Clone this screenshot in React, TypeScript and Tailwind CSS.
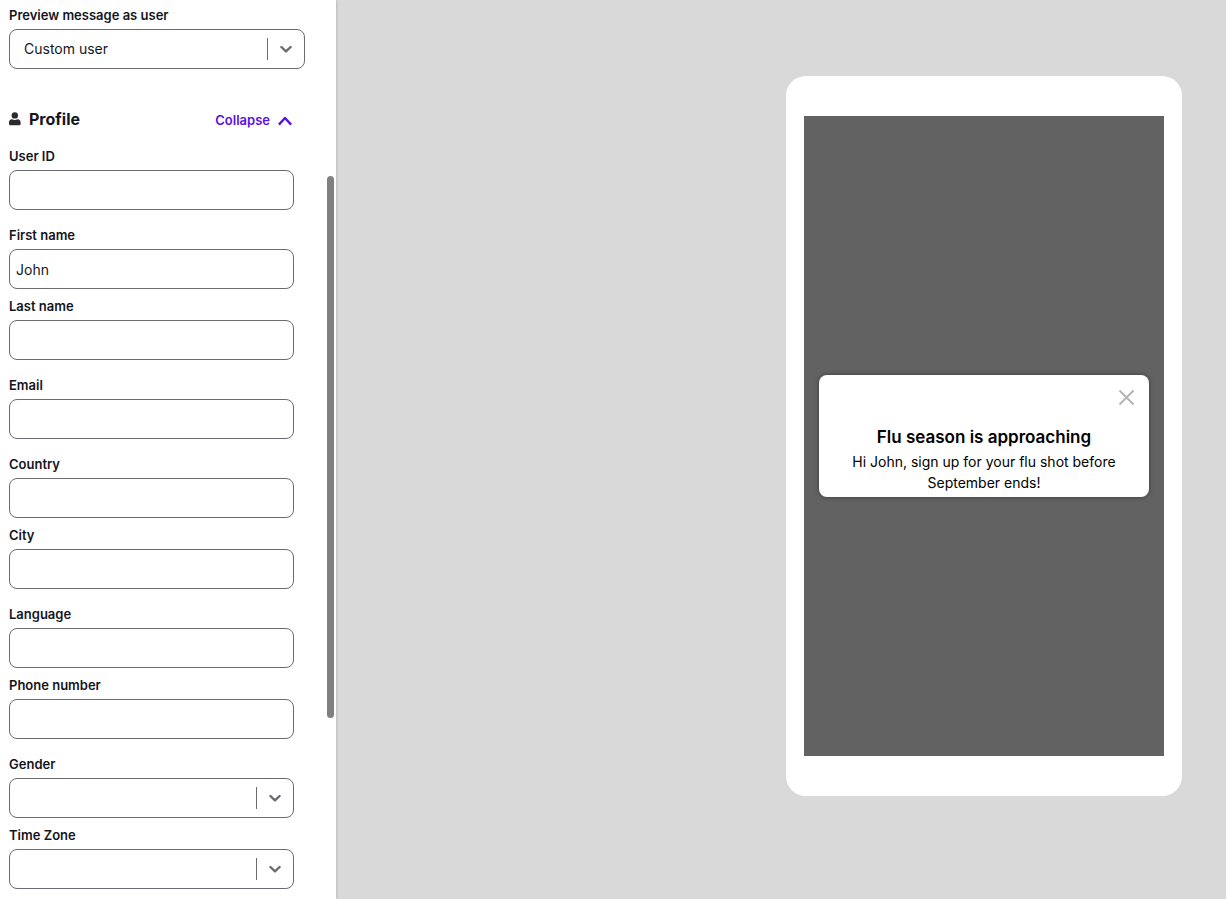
import React from 'react';

type Field = {
    id: string;
    label: string;
    value?: string;
    type?: 'text' | 'select';
    spaced?: boolean;
};

const fields: Field[] = [
    { id: 'user-id', label: 'User ID' },
    { id: 'first-name', label: 'First name', value: 'John', spaced: true },
    { id: 'last-name', label: 'Last name' },
    { id: 'email', label: 'Email', spaced: true },
    { id: 'country', label: 'Country', spaced: true },
    { id: 'city', label: 'City' },
    { id: 'language', label: 'Language', spaced: true },
    { id: 'phone', label: 'Phone number' },
    { id: 'gender', label: 'Gender', type: 'select', spaced: true },
    { id: 'time-zone', label: 'Time Zone', type: 'select' },
];

const Label = ({ htmlFor, children }: { htmlFor: string; children: React.ReactNode }) => (
    <label htmlFor={htmlFor} className="block text-[13px] leading-7 font-semibold text-[#15151e]">
        {children}
    </label>
);

const SelectBox = ({ id, value = '' }: { id: string; value?: string }) => (
    <div className="relative">
        <select
            id={id}
            defaultValue={value}
            className="block w-full h-10 appearance-none rounded-lg border border-[#6b6b73] bg-white pl-3.5 pr-12 text-sm text-[#15151e]"
        >
            <option value={value}>{value}</option>
        </select>
        <div className="pointer-events-none absolute inset-y-0 right-3 flex items-center gap-3">
            <span className="h-[22px] w-px bg-[#6b6b73]" />
            <svg width="13" height="8" viewBox="0 0 13 8" fill="none" stroke="#6b6b73" strokeWidth="2.4" strokeLinecap="round" strokeLinejoin="round">
                <path d="M1.4 2 6 6.4 10.6 2" />
            </svg>
        </div>
    </div>
);

const FormField = ({ field }: { field: Field }) => (
    <div className={field.spaced ? 'pt-[11px]' : 'pt-[3px]'}>
        <Label htmlFor={field.id}>{field.label}</Label>
        {field.type === 'select' ? (
            <SelectBox id={field.id} />
        ) : (
            <input
                id={field.id}
                type="text"
                defaultValue={field.value}
                className="block w-full h-10 rounded-lg border border-[#6b6b73] bg-white px-1.5 text-sm text-[#15151e]"
            />
        )}
    </div>
);

const Sidebar = () => (
    <aside className="relative w-[336px] shrink-0 bg-white pt-px pb-2.5 pl-[9px] shadow-[0_0_3px_rgba(0,0,0,0.25)]">
        <div className="mr-[31px]">
            <Label htmlFor="preview-user">Preview message as user</Label>
            <SelectBox id="preview-user" value="Custom user" />
        </div>

        <div className="mt-6 mr-11 flex h-[46px] items-center justify-between pt-1.5">
            <h2 className="flex items-center gap-2 text-base font-bold text-[#15151e]">
                <svg width="12" height="14" viewBox="0 0 12 14" fill="#2b2b2f">
                    <circle cx="5.8" cy="3.4" r="3.2" />
                    <path d="M0 12V10.4C0 8.6 1.2 7.3 3 7.3 4.8 8.2 6.8 8.2 8.6 7.3 10.4 7.3 11.6 8.6 11.6 10.4V12Q11.6 13.3 10.3 13.3H1.3Q0 13.3 0 12Z" />
                </svg>
                Profile
            </h2>
            <button type="button" className="flex items-center gap-2 pt-1 text-[13px] font-semibold text-[#5710e5]">
                Collapse
                <svg width="14" height="10" viewBox="0 0 14 10" fill="none" stroke="currentColor" strokeWidth="2.4" strokeLinejoin="round">
                    <path d="M0.9 8.6 7 2 13.1 8.6" />
                </svg>
            </button>
        </div>

        <div className="mr-[42px]">
            {fields.map((field) => (
                <FormField key={field.id} field={field} />
            ))}
        </div>

        <div className="absolute top-44 right-0.5 h-[542px] w-[7px] rounded-full bg-[#808080]" />
    </aside>
);

const MessageCard = () => (
    <div className="w-full rounded-lg bg-white px-6 pt-3.5 pb-1 text-center text-black shadow-[0_0_4px_rgba(0,0,0,0.4)]">
        <div className="-mr-2.5 flex justify-end">
            <button type="button" aria-label="Close">
                <svg width="17" height="17" viewBox="0 0 17 17" fill="none" stroke="#b5b5b5" strokeWidth="2">
                    <path d="M1.5 1.5 15.5 15.5M15.5 1.5 1.5 15.5" />
                </svg>
            </button>
        </div>
        <h3 className="mt-[17px] text-[17px] leading-7 font-semibold">Flu season is approaching</h3>
        <p className="text-sm leading-[21px]">Hi John, sign up for your flu shot before September ends!</p>
    </div>
);

const App = () => (
    <div className="flex min-h-screen font-['Inter',sans-serif]">
        <Sidebar />
        <main className="flex flex-1 items-start justify-end bg-[#d9d9d9] pt-[76px] pr-11">
            <div className="rounded-[20px] bg-white px-[18px] py-10">
                <div className="flex h-[640px] w-[360px] items-center bg-[#626262] px-[15px]">
                    <MessageCard />
                </div>
            </div>
        </main>
    </div>
);

export default App;
